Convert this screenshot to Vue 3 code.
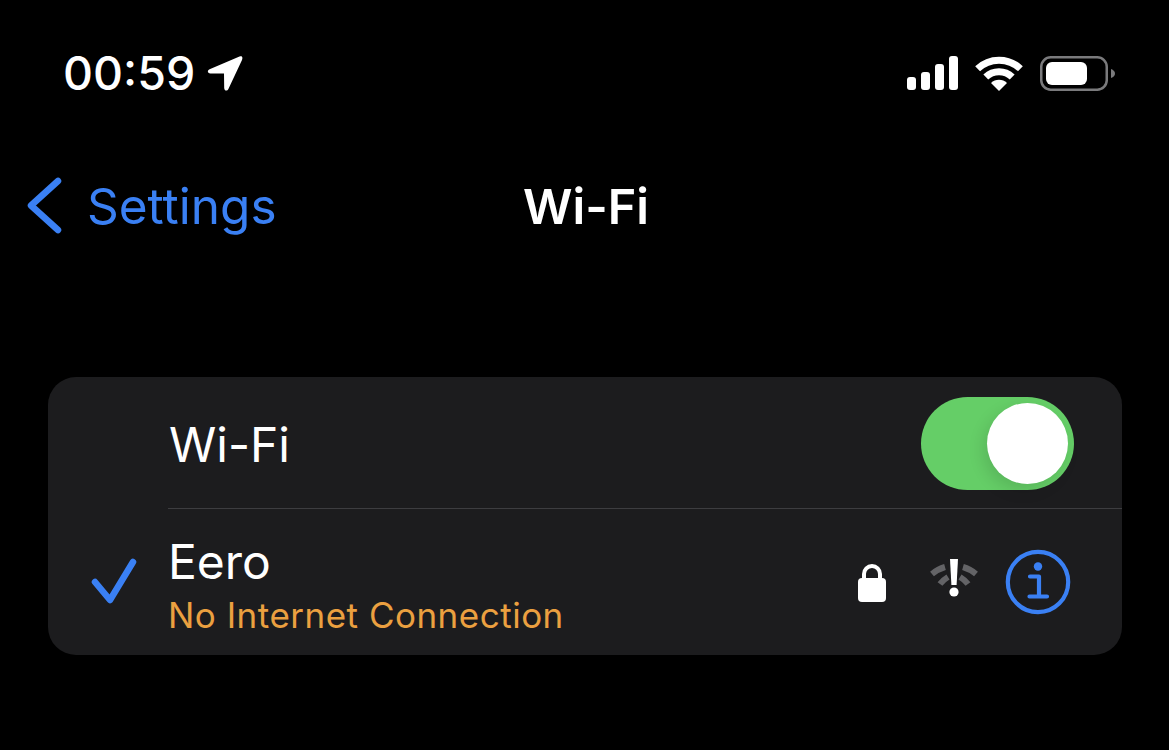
<script setup>
const ROWS = { network: 'Eero', status: 'No Internet Connection' }
</script>

<template>
  <div class="screen">
    <header class="status">
      <div class="time-group">
        <span class="time">00:59</span>
        <svg class="loc" width="36" height="37" viewBox="0 0 36 37">
          <path d="M32.5 1.5 2.6 14.2 C-.2 15.6 .6 18.4 3.4 18.4 L17 18.6 17.2 33 C17.3 36 20.2 36.4 21.4 34 L35 5 C36 2 35 .4 32.5 1.5 Z" fill="#fff"/>
        </svg>
      </div>
      <div class="indicators">
        <svg width="51" height="34" viewBox="0 0 51 34">
          <rect x="0" y="21" width="9" height="13" rx="3" fill="#fff"/>
          <rect x="14" y="16" width="9" height="18" rx="3" fill="#fff"/>
          <rect x="28" y="8" width="9" height="26" rx="3" fill="#fff"/>
          <rect x="42" y="0" width="9" height="34" rx="3" fill="#fff"/>
        </svg>
        <svg class="wifi" width="48" height="36" viewBox="0 0 48 36">
          <path d="M2.6 13.8 A31 31 0 0 1 45.4 13.8" fill="none" stroke="#fff" stroke-width="7"/>
          <path d="M10.8 22 A19 19 0 0 1 37.2 22" fill="none" stroke="#fff" stroke-width="7"/>
          <path d="M24 36 L16 28 A11.5 11.5 0 0 1 32 28 Z" fill="#fff"/>
        </svg>
        <svg class="battery" width="75" height="35" viewBox="0 0 75 35">
          <rect x="1.25" y="1.25" width="65.5" height="32.5" rx="9.5" fill="none" stroke="#7a7a7c" stroke-width="2.5"/>
          <rect x="6" y="6" width="41" height="23" rx="6" fill="#fff"/>
          <path d="M71 13 C73.5 14 75 15.5 75 17.5 C75 19.5 73.5 21 71 22 Z" fill="#7a7a7c"/>
        </svg>
      </div>
    </header>

    <nav class="nav">
      <div class="back">
        <svg width="38" height="60" viewBox="0 0 38 60">
          <path d="M31 5 L4 29.5 L31 54" fill="none" stroke="#3a80f4" stroke-width="6.5" stroke-linecap="round" stroke-linejoin="round"/>
        </svg>
        <span class="back-label">Settings</span>
      </div>
      <h1 class="title">Wi-Fi</h1>
    </nav>

    <section class="card">
      <div class="row row-toggle">
        <span class="label label-toggle">Wi-Fi</span>
        <div class="switch"><div class="knob"></div></div>
      </div>
      <div class="row row-network">
        <svg class="check" width="48" height="46" viewBox="0 0 48 46">
          <path d="M4 24 L19 42 L42 4" fill="none" stroke="#3a80f4" stroke-width="6.5" stroke-linecap="round" stroke-linejoin="round"/>
        </svg>
        <div class="network">
          <span class="label">{{ ROWS.network }}</span>
          <span class="sub">{{ ROWS.status }}</span>
        </div>
        <div class="actions">
          <svg width="28" height="39" viewBox="0 0 28 39">
            <path d="M6 16 V11 A8 8 0 0 1 22 11 V16" fill="none" stroke="#fff" stroke-width="4"/>
            <rect x="0" y="15" width="28" height="24" rx="4" fill="#fff"/>
          </svg>
          <svg class="warn" width="48" height="38" viewBox="0 0 48 38">
            <path d="M2 15 Q8 10 15 8" fill="none" stroke="#636366" stroke-width="6"/>
            <path d="M46 15 Q40 10 33 8" fill="none" stroke="#636366" stroke-width="6"/>
            <path d="M10 25 Q13 21 18 18" fill="none" stroke="#636366" stroke-width="6"/>
            <path d="M38 25 Q35 21 30 18" fill="none" stroke="#636366" stroke-width="6"/>
            <path d="M20 0 H28 L26.6 26 H21.4 Z" fill="#fff"/>
            <circle cx="24" cy="33" r="4.6" fill="#fff"/>
          </svg>
          <svg width="66" height="66" viewBox="0 0 66 66">
            <circle cx="33" cy="33" r="30.2" fill="none" stroke="#3a80f4" stroke-width="4.2"/>
            <circle cx="33" cy="17.5" r="4.2" fill="#3a80f4"/>
            <path d="M25 27.5 H34 V47 M24.5 47.5 H42" fill="none" stroke="#3a80f4" stroke-width="4.2" stroke-linecap="round" stroke-linejoin="round"/>
          </svg>
        </div>
      </div>
    </section>
  </div>
</template>

<style scoped>
.screen {
  width: 1169px;
  height: 750px;
  background: #000;
  color: #fff;
  font-family: Inter, "Liberation Sans", sans-serif;
  overflow: hidden;
  box-sizing: border-box;
  padding-top: 54px;
}
.status {
  display: flex;
  justify-content: space-between;
  align-items: center;
  height: 38px;
  padding: 0 54px 0 63px;
}
.time-group { display: flex; align-items: center; gap: 12px; }
.time { font-size: 46.5px; font-weight: 500; line-height: 38px; letter-spacing: 0; }
.indicators { display: flex; align-items: center; gap: 17px; }
.nav {
  position: relative;
  display: flex;
  align-items: center;
  height: 60px;
  margin-top: 84px;
  padding-left: 27px;
}
.back { display: flex; align-items: center; gap: 22px; }
.back-label { font-size: 49.5px; color: #3a80f4; }
.title {
  position: absolute;
  left: 0;
  right: 0;
  text-align: center;
  margin: 0;
  padding-left: 3px;
  font-size: 48.5px;
  font-weight: 600;
}
.card {
  margin: 141px 47px 0 48px;
  height: 278px;
  background: #1c1c1e;
  border-radius: 28px;
  overflow: hidden;
}
.row { display: flex; align-items: center; position: relative; }
.row-toggle {
  height: 132px;
  padding-left: 121px;
  padding-right: 48px;
  justify-content: space-between;
}
.row-toggle::after {
  content: "";
  position: absolute;
  left: 120px;
  right: 0;
  bottom: 0;
  height: 1px;
  background: #3d3d40;
}
.switch {
  width: 153px;
  height: 93px;
  border-radius: 47px;
  background: #65ce67;
  position: relative;
  margin-top: 1px;
}
.knob {
  position: absolute;
  right: 6px;
  top: 6px;
  width: 81px;
  height: 81px;
  border-radius: 50%;
  background: #fff;
  box-shadow: -4px 6px 16px rgba(0, 0, 0, 0.12);
}
.row-network { height: 146px; padding-left: 43px; padding-right: 51px; }
.check { margin-top: -2px; }
.network { display: flex; flex-direction: column; margin-left: 29px; flex: 1; padding-top: 5px; }
.label { font-size: 48px; line-height: 56px; }
.label-toggle { padding-top: 3px; }
.sub { font-size: 35px; line-height: 40px; color: #eba040; letter-spacing: 0.5px; margin-top: 5px; }
.actions { display: flex; align-items: center; gap: 43px; }
.warn { margin-left: 1px; margin-right: -16px; margin-top: -8px; }
</style>
